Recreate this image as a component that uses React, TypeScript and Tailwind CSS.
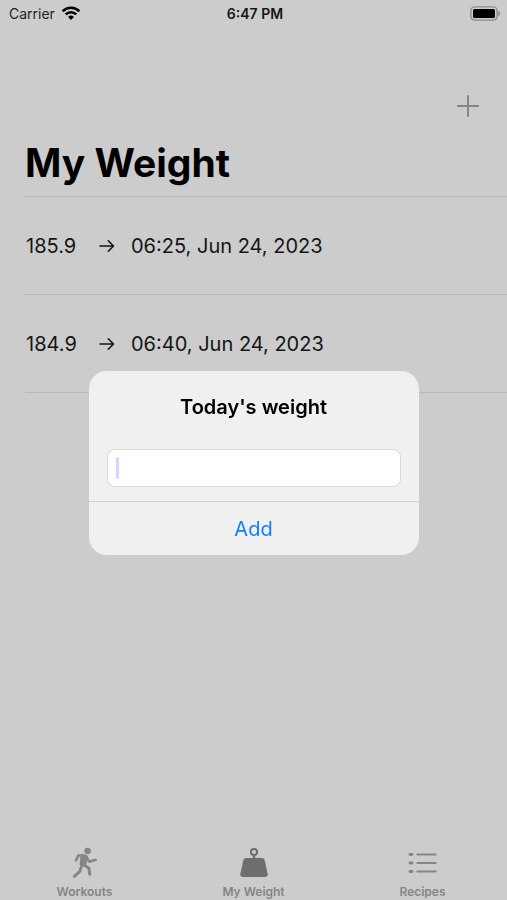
import React, { useState } from "react";

type Entry = { weight: string; date: string };

const entries: Entry[] = [
  { weight: "185.9", date: "06:25, Jun 24, 2023" },
  { weight: "184.9", date: "06:40, Jun 24, 2023" },
];

function WifiIcon() {
  return (
    <svg width="20" height="16" viewBox="0 0 20 16" fill="none" stroke="black" aria-hidden="true">
      <path d="M1.6 5.2a12 12 0 0 1 16.8 0" strokeWidth="2.6" />
      <path d="M4.7 8.3a7.6 7.6 0 0 1 10.6 0" strokeWidth="2.5" />
      <path d="M10 14l-2.9-3a4.1 4.1 0 0 1 5.8 0z" fill="black" stroke="none" />
    </svg>
  );
}

function BatteryIcon() {
  return (
    <svg width="31" height="16" viewBox="0 0 31 16" fill="none" aria-hidden="true">
      <rect x="0.9" y="0.9" width="26.2" height="13.2" rx="3.8" stroke="#8c8c8c" strokeWidth="1.4" />
      <rect x="3" y="3" width="22" height="9" rx="1.5" fill="black" />
      <path d="M28.3 4.8v5.4c1.1-.5 1.8-1.5 1.8-2.7s-.7-2.2-1.8-2.7z" fill="#8c8c8c" />
    </svg>
  );
}

function ArrowIcon() {
  return (
    <svg width="16" height="16" viewBox="0 0 16 16" fill="none" stroke="#151515" strokeWidth="1.6" strokeLinecap="round" strokeLinejoin="round" aria-hidden="true">
      <path d="M1 8h13.4M9.3 2.8l5.2 5.2-5.2 5.2" />
    </svg>
  );
}

function RunnerIcon() {
  return (
    <svg width="32" height="34" viewBox="0 0 32 34" fill="none" stroke="#858585" strokeLinecap="round" strokeLinejoin="round" aria-hidden="true">
      <circle cx="18.6" cy="5" r="3.3" fill="#858585" stroke="none" />
      <path d="M13 9.8l4 .4.8 1.6-2.5 7.4-3.2-1.4z" fill="#858585" strokeWidth="3" />
      <path d="M14 9.5H9.2L7 14.4" strokeWidth="2.5" />
      <path d="M17.5 11.5l3 4.3 6.2-2" strokeWidth="2.5" />
      <path d="M14.5 18.8l5.3 3.3 1 6.2" strokeWidth="3" />
      <path d="M12.6 20l-1.8 5.4-5.4 5" strokeWidth="2.9" />
    </svg>
  );
}

function WeightIcon() {
  return (
    <svg width="32" height="34" viewBox="0 0 32 34" fill="none" aria-hidden="true">
      <circle cx="16" cy="6" r="3.1" stroke="#6e6e6e" strokeWidth="2" />
      <path d="M16 9v3" stroke="#6e6e6e" strokeWidth="2.4" />
      <path d="M8 12h16c1.500 0 2.200.8 2.600 2.100l3 13.500c.5 2.100-.5 3.300-2.500 3.300H4.900c-2 0-3-1.200-2.500-3.300l3-13.500C5.800 12.800 6.500 12 8 12z" fill="#6e6e6e" />
    </svg>
  );
}

function ListIcon() {
  return (
    <svg width="32" height="34" viewBox="0 0 32 34" fill="none" stroke="#858585" strokeLinecap="round" aria-hidden="true">
      <path d="M3 8.500h2M3 17h2M3 25.500h2" strokeWidth="2.800" />
      <path d="M10.500 8.500h18M10.500 17h18M10.500 25.500h18" strokeWidth="2.200" />
    </svg>
  );
}

const tabs = [
  { label: "Workouts", icon: <RunnerIcon />, active: false },
  { label: "My Weight", icon: <WeightIcon />, active: true },
  { label: "Recipes", icon: <ListIcon />, active: false },
];

export default function App() {
  const [value, setValue] = useState("");

  return (
    <div className="flex min-h-screen flex-col bg-[#cccccc] font-['Inter','Liberation_Sans',sans-serif] text-black">
      <header className="grid h-7 grid-cols-3 items-center pr-1.5 pl-[9px]">
        <div className="flex items-center gap-1.5">
          <span className="text-sm text-[#222222]">Carrier</span>
          <WifiIcon />
        </div>
        <span className="text-center text-sm font-semibold text-[#151515]">6:47 PM</span>
        <div className="flex justify-end">
          <BatteryIcon />
        </div>
      </header>

      <main className="flex-1">
        <div className="flex justify-end pt-16 pr-[25px]">
          <button type="button" aria-label="Add weight" className="flex size-7 items-center justify-center">
            <svg width="24" height="24" viewBox="0 0 24 24" stroke="#858585" strokeWidth="2" strokeLinecap="round" aria-hidden="true">
              <path d="M2 12h20M12 2v20" />
            </svg>
          </button>
        </div>
        <h1 className="mt-[19px] pb-[9px] pl-[25px] text-[39px] leading-12 font-bold">My Weight</h1>
        <ul className="ml-[25px] border-t border-[#b8b8b8]">
          {entries.map((entry) => (
            <li key={entry.date} className="flex h-[98px] items-center border-b border-[#b8b8b8] pl-px text-xl text-[#151515]">
              <span className="w-[73px]">{entry.weight}</span>
              <ArrowIcon />
              <span className="ml-4">{entry.date}</span>
            </li>
          ))}
        </ul>
      </main>

      <nav className="grid grid-cols-3">
        {tabs.map((tab) => (
          <button
            key={tab.label}
            type="button"
            aria-current={tab.active ? "page" : undefined}
            className="flex flex-col items-center gap-1 text-xs font-semibold text-[#858585]"
          >
            {tab.icon}
            <span>{tab.label}</span>
          </button>
        ))}
      </nav>

      <div className="fixed inset-0 flex items-center justify-center pt-[26px]">
        <form
          role="dialog"
          aria-labelledby="dialog-title"
          onSubmit={(event) => event.preventDefault()}
          className="w-[330px] overflow-hidden rounded-[18px] bg-[#f0f0f0]"
        >
          <div className="px-[18px] pt-[22px] pb-3.5">
            <h2 id="dialog-title" className="text-center text-xl leading-7 font-semibold">
              <label htmlFor="weight">Today's weight</label>
            </h2>
            <div className="relative mt-7">
              <input
                id="weight"
                inputMode="decimal"
                value={value}
                onChange={(event) => setValue(event.target.value)}
                className="block h-[38px] w-full rounded-lg border border-[#d9d9d9] bg-white px-2.5 text-lg caret-[#d5d5ff] outline-none"
              />
              {value === "" && (
                <span className="pointer-events-none absolute inset-y-2 left-[9px] w-[3px] rounded-full bg-[#d5d5ff]" />
              )}
            </div>
          </div>
          <button type="submit" className="h-[54px] w-full border-t border-[#d3d3d3] text-xl text-[#147efb]">
            Add
          </button>
        </form>
      </div>
    </div>
  );
}
